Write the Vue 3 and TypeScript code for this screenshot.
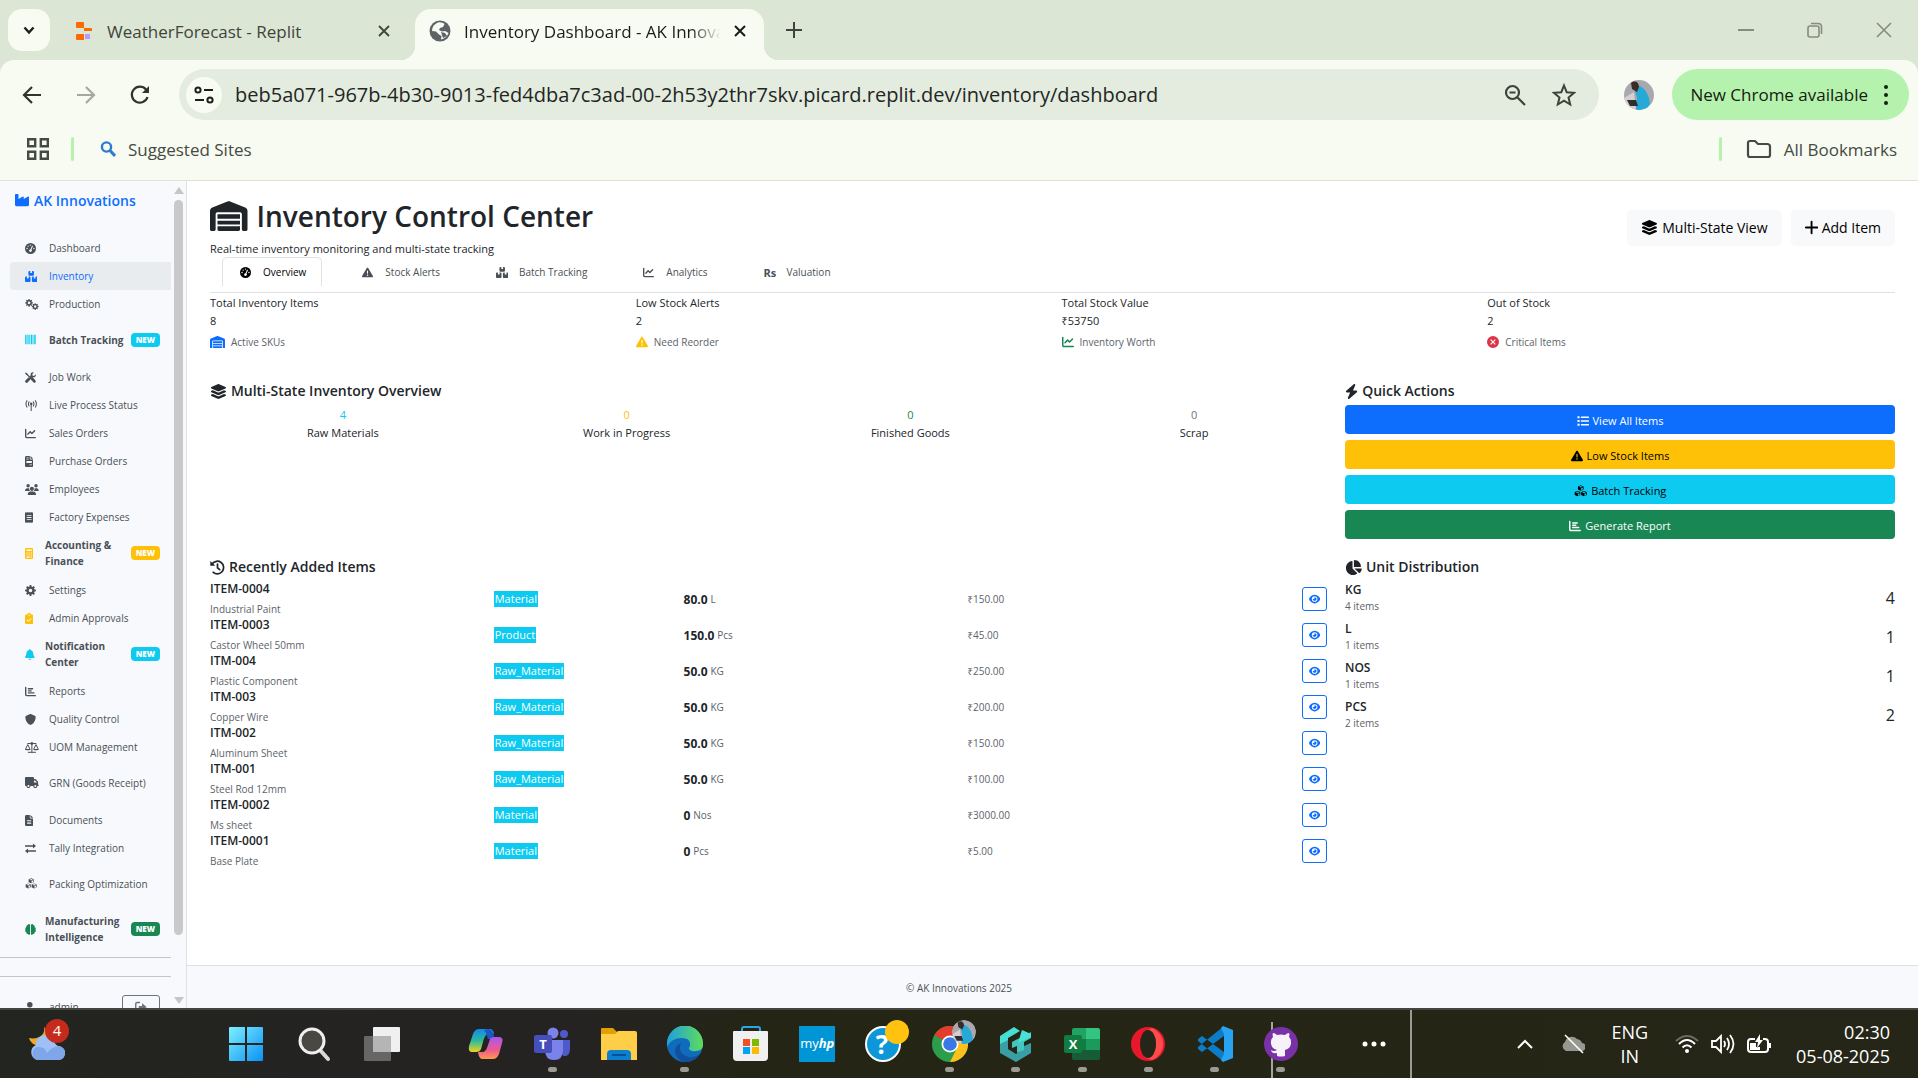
<script setup lang="ts">
import { h, ref } from 'vue'

interface Glyph { w: number; d?: string; s?: string; sw?: number }

function gear(cx: number, cy: number, r: number, hole: number, teeth = 8): string {
  const pts: string[] = []
  const step = (Math.PI * 2) / teeth
  for (let i = 0; i < teeth; i++) {
    const a = i * step
    for (const [k, rad] of [[-0.3, 0.76], [-0.2, 1], [0.2, 1], [0.3, 0.76]]) {
      pts.push(`${(cx + Math.cos(a + k * step) * r * rad).toFixed(1)} ${(cy + Math.sin(a + k * step) * r * rad).toFixed(1)}`)
    }
  }
  return `M${pts.join('L')}ZM${cx - hole} ${cy}a${hole} ${hole} 0 1 0 ${hole * 2} 0a${hole} ${hole} 0 1 0 ${-hole * 2} 0z`
}

function cube(x: number, y: number): string {
  return `M${x} ${y}l120 -48l120 48v130l-120 54l-120 -54zM${x + 36} ${y + 14}l84 34l84 -34l-84 -30zM${x + 136} ${y + 78}v84l72 -32v-82z`
}

const page = 'M64 0C28.7 0 0 28.7 0 64V448c0 35.3 28.7 64 64 64H320c35.3 0 64-28.7 64-64V160H256c-17.7 0-32-14.3-32-32V0H64zM256 0V128H384L256 0z'
const chartAxis = 'M32 32c17.7 0 32 14.3 32 32V400c0 8.8 7.2 16 16 16H480c17.7 0 32 14.3 32 32s-14.3 32-32 32H80c-44.2 0-80-35.8-80-80V64C0 46.3 14.3 32 32 32z'

const glyphs: Record<string, Glyph> = {
  industry: { w: 512, d: 'M32 32C14.3 32 0 46.3 0 64V304v48 80c0 26.5 21.5 48 48 48H464c26.5 0 48-21.5 48-48V304 152.2c0-18.2-19.4-29.7-35.4-21.1L320 215.4V152.2c0-18.2-19.4-29.7-35.4-21.1L128 215.4V64c0-17.7-14.3-32-32-32H32z' },
  gauge: { w: 512, d: 'M0 256a256 256 0 1 1 512 0A256 256 0 1 1 0 256zM288 96a32 32 0 1 0 -64 0 32 32 0 1 0 64 0zM256 416c35.3 0 64-28.7 64-64c0-17.4-6.9-33.1-18.1-44.6L366 161.7c5.3-12.1-.2-26.3-12.3-31.6s-26.3 .2-31.6 12.3L257.9 288c-.6 0-1.3 0-1.9 0c-35.3 0-64 28.7-64 64s28.7 64 64 64zM176 144a32 32 0 1 0 -64 0 32 32 0 1 0 64 0zM96 288a32 32 0 1 0 0-64 32 32 0 1 0 0 64zm352-32a32 32 0 1 0 -64 0 32 32 0 1 0 64 0z' },
  boxes: { w: 576, d: 'M248 0H208c-26.5 0-48 21.5-48 48V160c0 35.3 28.7 64 64 64H352c35.3 0 64-28.7 64-64V48c0-26.5-21.5-48-48-48H328V80c0 8.8-7.2 16-16 16H264c-8.8 0-16-7.2-16-16V0zM48 256c-26.5 0-48 21.5-48 48V464c0 26.5 21.5 48 48 48H208c26.5 0 48-21.5 48-48V304c0-26.5-21.5-48-48-48H168v80c0 8.8-7.2 16-16 16H104c-8.8 0-16-7.2-16-16V256H48zM368 256c-26.5 0-48 21.5-48 48V464c0 26.5 21.5 48 48 48H528c26.5 0 48-21.5 48-48V304c0-26.5-21.5-48-48-48H488v80c0 8.8-7.2 16-16 16H424c-8.8 0-16-7.2-16-16V256H368z' },
  gears: { w: 640, d: gear(190, 180, 180, 62) + gear(475, 350, 160, 56) },
  gear: { w: 512, d: gear(256, 256, 256, 84) },
  barcode: { w: 512, d: 'M0 32h40v448H0zM64 32h24v448H64zM112 32h56v448h-56zM200 32h40v448h-40zM272 32h56v448h-56zM352 32h24v448h-24zM400 32h56v448h-56zM480 32h32v448h-32z' },
  tools: { w: 512, d: 'M30 20L100 60L130 110L240 220L200 260L90 150L40 120L0 50zM310 270L360 250L490 400C512 430 500 470 480 485C450 512 425 505 400 485L270 350zM500 110L420 185L360 170L335 100L410 20C320 -10 240 60 270 150L20 390C-5 420 0 460 30 490C60 515 95 510 120 485L350 245C450 270 525 190 500 110z' },
  tower: { w: 576, s: 'M288 200V500M190 80q-60 100 0 200M386 80q60 100 0 200M90 30q-90 150 0 300M486 30q90 150 0 300', sw: 48, d: 'M228 180a60 60 0 1 0 120 0a60 60 0 1 0 -120 0z' },
  line: { w: 512, d: 'M64 64c0-17.7-14.3-32-32-32S0 46.3 0 64V400c0 44.2 35.8 80 80 80H480c17.7 0 32-14.3 32-32s-14.3-32-32-32H80c-8.8 0-16-7.2-16-16V64zm406.6 86.6c12.5-12.5 12.5-32.8 0-45.3s-32.8-12.5-45.3 0L320 210.7l-57.4-57.4c-12.5-12.5-32.8-12.5-45.3 0l-112 112c-12.5 12.5-12.5 32.8 0 45.3s32.8 12.5 45.3 0L240 221.3l57.4 57.4c12.5 12.5 32.8 12.5 45.3 0l128-128z' },
  invoice: { w: 384, d: page + 'M64 64h110v34H64zM64 128h110v34H64zM64 230h256v100H64zM208 400h112v34H208z' },
  file: { w: 384, d: page + 'M96 240h192v36H96zM96 310h192v36H96zM96 380h192v36H96z' },
  users: { w: 640, d: 'M144 0a80 80 0 1 1 0 160A80 80 0 1 1 144 0zM512 0a80 80 0 1 1 0 160A80 80 0 1 1 512 0zM0 299C0 240 48 192 107 192h42c16 0 31 4 45 10c-10 60 10 92 42 118H21c-12 0-21-10-21-21zM405 320c32-27 52-68 43-118c14-6 29-10 45-10h42c59 0 107 48 107 107c0 11-9 21-21 21zM224 224a96 96 0 1 1 192 0 96 96 0 1 1 -192 0zM128 485C128 412 188 352 261 352H379c73 0 133 60 133 133c0 15-12 27-27 27H155c-15 0-27-12-27-27z' },
  receipt: { w: 384, d: 'M0 10L48 40L96 0L144 40L192 0L240 40L288 0L336 40L384 10V502L336 472L288 512L240 472L192 512L144 472L96 512L48 472L0 502zM80 140v36h224v-36zM80 238v36h224v-36zM80 336v36h224v-36z' },
  calculator: { w: 384, d: 'M64 0H320a64 64 0 0 1 64 64V448a64 64 0 0 1 -64 64H64a64 64 0 0 1 -64 -64V64a64 64 0 0 1 64 -64zM64 64v80h256V64zM64 208v52h56v-52zM164 208v52h56v-52zM264 208v52h56v-52zM64 300v52h56v-52zM164 300v52h56v-52zM264 300v52h56v-52zM64 396v52h156v-52zM264 396v52h56v-52z' },
  clipboard: { w: 384, d: 'M192 0c-42 0-77 27-90 64H64C29 64 0 93 0 128V448c0 35 29 64 64 64H320c35 0 64-29 64-64V128c0-35-29-64-64-64H282C269 27 234 0 192 0zm0 64a32 32 0 1 1 0 64 32 32 0 1 1 0-64zM305 273L177 401c-9 9-25 9-34 0L79 337l34-34 47 47L271 239z' },
  bell: { w: 448, d: 'M224 0c-17.7 0-32 14.3-32 32V51.2C119 66 64 130.6 64 208v18.8c0 47-17.3 92.4-48.5 127.6l-7.4 8.3c-8.4 9.4-10.4 22.9-5.3 34.4S19.4 416 32 416H416c12.6 0 24-7.4 29.2-18.9s3.1-25-5.3-34.4l-7.4-8.3C401.3 319.2 384 273.9 384 226.8V208c0-77.4-55-142-128-156.8V32c0-17.7-14.3-32-32-32zm45.3 493.3c12-12 18.7-28.3 18.7-45.3H224 160c0 17 6.7 33.3 18.7 45.3s28.3 18.7 45.3 18.7s33.3-6.7 45.3-18.7z' },
  bars: { w: 512, d: chartAxis + 'M128 128c0-17.7 14.3-32 32-32l192 0c17.7 0 32 14.3 32 32s-14.3 32-32 32l-192 0c-17.7 0-32-14.3-32-32zm32 64H288c17.7 0 32 14.3 32 32s-14.3 32-32 32H160c-17.7 0-32-14.3-32-32s14.3-32 32-32zm0 96H416c17.7 0 32 14.3 32 32s-14.3 32-32 32H160c-17.7 0-32-14.3-32-32s14.3-32 32-32z' },
  shield: { w: 512, d: 'M256 0c4.6 0 9.2 1 13.4 2.9L457.7 82.8c22 9.3 38.4 31 38.3 57.2c-.5 99.2-41.3 280.7-213.6 363.2c-16.7 8-36.1 8-52.8 0C57.3 420.7 16.5 239.2 16 140c-.1-26.2 16.3-47.9 38.3-57.2L242.7 2.9C246.8 1 251.4 0 256 0z' },
  scale: { w: 640, s: 'M130 70H510M320 30V470M150 480H490M30 320L128 120L226 320M414 320L512 120L610 320', sw: 46, d: 'M0 320H256C250 410 6 410 0 320zM384 320H640C634 410 390 410 384 320zM256 70a64 64 0 1 0 128 0a64 64 0 1 0 -128 0z' },
  truck: { w: 640, d: 'M48 0C21.5 0 0 21.5 0 48V368c0 26.5 21.5 48 48 48H64c0 53 43 96 96 96s96-43 96-96H384c0 53 43 96 96 96s96-43 96-96h32c17.7 0 32-14.3 32-32s-14.3-32-32-32V288 256 237.3c0-17-6.7-33.3-18.7-45.3L512 114.7c-12-12-28.3-18.7-45.3-18.7H416V48c0-26.5-21.5-48-48-48H48zM416 160h50.7L544 237.3V256H416V160zM112 416a48 48 0 1 1 96 0 48 48 0 1 1 -96 0zm368-48a48 48 0 1 1 0 96 48 48 0 1 1 0-96z' },
  exchange: { w: 512, s: 'M10 140H440M500 372H70', sw: 60, d: 'M370 20L512 140L370 260zM142 252L0 372L142 492z' },
  cubes: { w: 576, d: cube(168, 62) + cube(30, 300) + cube(306, 300) },
  brain: { w: 512, d: 'M236 30C200-10 140 0 125 50C75 55 50 100 65 145C15 165 0 220 20 265C-5 320 20 375 65 385C60 440 105 470 145 465C170 520 236 520 236 460zM276 30C312-10 372 0 387 50C437 55 462 100 447 145C497 165 512 220 492 265C517 320 492 375 447 385C452 440 407 470 367 465C342 520 276 520 276 460z' },
  user: { w: 448, d: 'M224 256A128 128 0 1 0 224 0a128 128 0 1 0 0 256zm-45.7 48C79.8 304 0 383.8 0 482.3C0 498.7 13.3 512 29.7 512H418.3c16.4 0 29.7-13.3 29.7-29.7C448 383.8 368.2 304 269.7 304H178.3z' },
  logout: { w: 512, s: 'M190 64H90q-58 0-58 58V390q0 58 58 58H190', sw: 60, d: 'M160 210H300V100L500 256L300 412V302H160z' },
  triangle: { w: 512, d: 'M256 32c14.2 0 27.3 7.5 34.5 19.8l216 368c7.3 12.4 7.3 27.7 .2 40.1S486.3 480 472 480H40c-14.3 0-27.6-7.7-34.7-20.1s-7-27.8 .2-40.1l216-368C228.7 39.5 241.8 32 256 32zm0 128c-13.3 0-24 10.7-24 24V296c0 13.3 10.7 24 24 24s24-10.7 24-24V184c0-13.3-10.7-24-24-24zm32 224a32 32 0 1 0 -64 0 32 32 0 1 0 64 0z' },
  warehouse: { w: 640, d: 'M0 488V171.3c0-26.2 15.9-49.7 40.2-59.4L308.1 4.8c7.6-3.1 16.1-3.1 23.8 0L599.8 111.9c24.3 9.7 40.2 33.3 40.2 59.4V488c0 13.3-10.7 24-24 24H568c-13.3 0-24-10.7-24-24V224c0-17.7-14.3-32-32-32H128c-17.7 0-32 14.3-32 32V488c0 13.3-10.7 24-24 24H24c-13.3 0-24-10.7-24-24zm488 24l-336 0c-13.3 0-24-10.7-24-24V432H512l0 56c0 13.3-10.7 24-24 24zM128 400V336H512v64H128zm0-96V224H512v80H128z' },
  cross: { w: 512, d: 'M256 0a256 256 0 1 1 0 512a256 256 0 1 1 0-512zM175 141L141 175L222 256L141 337L175 371L256 290L337 371L371 337L290 256L371 175L337 141L256 222z' },
  layers: { w: 576, d: 'M264.5 5.2c14.9-6.9 32.1-6.9 47 0l218.6 101c8.5 3.9 13.9 12.4 13.9 21.8s-5.4 17.9-13.9 21.8l-218.6 101c-14.9 6.9-32.1 6.9-47 0L45.9 149.8C37.4 145.8 32 137.3 32 128s5.4-17.9 13.9-21.8L264.5 5.2zM476.9 209.6l53.2 24.6c8.5 3.9 13.9 12.4 13.9 21.8s-5.4 17.9-13.9 21.8l-218.6 101c-14.9 6.9-32.1 6.9-47 0L45.9 277.8C37.4 273.8 32 265.3 32 256s5.4-17.9 13.9-21.8l53.2-24.6 152 70.2c23.4 10.8 50.4 10.8 73.8 0l152-70.2zm-152 198.2l152-70.2 53.2 24.6c8.5 3.9 13.9 12.4 13.9 21.8s-5.4 17.9-13.9 21.8l-218.6 101c-14.9 6.9-32.1 6.9-47 0L45.9 405.8C37.4 401.8 32 393.3 32 384s5.4-17.9 13.9-21.8l53.2-24.6 152 70.2c23.4 10.8 50.4 10.8 73.8 0z' },
  bolt: { w: 448, d: 'M349.4 44.6c5.9-13.7 1.5-29.7-10.6-38.5s-28.6-8-39.9 1.8l-256 224c-10 8.8-13.6 22.9-8.9 35.3S50.7 288 64 288H175.5L98.6 467.4c-5.9 13.7-1.5 29.7 10.6 38.5s28.6 8 39.9-1.8l256-224c10-8.8 13.6-22.9 8.9-35.3s-16.6-20.7-30-20.7H272.5L349.4 44.6z' },
  history: { w: 512, s: 'M75 130A215 215 0 1 1 110 420M256 140V266L330 330', sw: 60, d: 'M10 30L10 200H180z' },
  pie: { w: 576, d: 'M304 240V16.6c0-9 7-16.6 16-16.6C443.7 0 544 100.3 544 224c0 9-7.6 16-16.6 16H304zM32 272C32 150.7 122.1 50.3 239 34.3c9.2-1.3 17 6.1 17 15.4V288L412.5 444.5c6.7 6.7 6.2 17.7-1.5 23.1C371.8 495.6 323.8 512 272 512C139.5 512 32 404.6 32 272zm526.4 16c9.3 0 16.6 7.8 15.4 17c-7.7 55.9-34.6 105.6-73.9 142.3c-6 5.6-15.4 5.2-21.2-.7L320 288H558.4z' },
  eye: { w: 576, d: 'M288 32c-80.8 0-145.5 36.8-192.6 80.6C48.6 156 17.3 208 2.5 243.7c-3.3 7.9-3.3 16.7 0 24.6C17.3 304 48.6 356 95.4 399.4C142.5 443.2 207.2 480 288 480s145.5-36.8 192.6-80.6c46.8-43.5 78.1-95.4 93-131.1c3.3-7.9 3.3-16.7 0-24.6c-14.9-35.7-46.2-87.7-93-131.1C433.5 68.8 368.8 32 288 32zM144 256a144 144 0 1 1 288 0 144 144 0 1 1 -288 0zm144-64c0 35.3-28.7 64-64 64c-7.1 0-13.9-1.2-20.3-3.3c-5.5-1.8-11.9 1.6-11.7 7.4c.3 6.9 1.3 13.8 3.2 20.7c13.7 51.2 66.4 81.6 117.6 67.9s81.6-66.4 67.9-117.6c-11.1-41.5-47.8-69.4-88.6-71.1c-5.8-.2-9.2 6.1-7.4 11.7c2.1 6.4 3.3 13.2 3.3 20.3z' },
  list: { w: 512, s: 'M190 96H490M190 256H490M190 416H490', sw: 64, d: 'M20 50h90v90H20zM20 210h90v90H20zM20 370h90v90H20z' },
  plus: { w: 448, s: 'M224 60V452M28 256H420', sw: 64 },
}

const Icon = (props: { name: string }) => {
  const g = glyphs[props.name]
  return h('svg', { viewBox: `0 0 ${g.w} 512`, class: 'icon', 'aria-hidden': 'true' }, [
    g.d ? h('path', { d: g.d, fill: 'currentColor', 'fill-rule': 'evenodd' }) : null,
    g.s ? h('path', { d: g.s, fill: 'none', stroke: 'currentColor', 'stroke-width': g.sw, 'stroke-linecap': 'round' }) : null,
  ])
}
Icon.props = ['name']

const url = ref('beb5a071-967b-4b30-9013-fed4dba7c3ad-00-2h53y2thr7skv.picard.replit.dev/inventory/dashboard')

const nav = [
  { icon: 'gauge', label: 'Dashboard' },
  { icon: 'boxes', label: 'Inventory', active: true },
  { icon: 'gears', label: 'Production' },
  { icon: 'barcode', label: 'Batch Tracking', tone: 'cyan', badge: true },
  { icon: 'tools', label: 'Job Work' },
  { icon: 'tower', label: 'Live Process Status' },
  { icon: 'line', label: 'Sales Orders' },
  { icon: 'invoice', label: 'Purchase Orders' },
  { icon: 'users', label: 'Employees' },
  { icon: 'receipt', label: 'Factory Expenses' },
  { icon: 'calculator', label: 'Accounting & Finance', tone: 'amber', badge: true, wrap: true },
  { icon: 'gear', label: 'Settings' },
  { icon: 'clipboard', label: 'Admin Approvals', tone: 'amber' },
  { icon: 'bell', label: 'Notification Center', tone: 'cyan', badge: true, wrap: true },
  { icon: 'bars', label: 'Reports' },
  { icon: 'shield', label: 'Quality Control' },
  { icon: 'scale', label: 'UOM Management' },
  { icon: 'truck', label: 'GRN (Goods Receipt)', tall: true },
  { icon: 'file', label: 'Documents' },
  { icon: 'exchange', label: 'Tally Integration' },
  { icon: 'cubes', label: 'Packing Optimization', tall: true },
  { icon: 'brain', label: 'Manufacturing Intelligence', tone: 'green', badge: true, wrap: true },
]

const tabs = [
  { icon: 'gauge', label: 'Overview' },
  { icon: 'triangle', label: 'Stock Alerts' },
  { icon: 'boxes', label: 'Batch Tracking' },
  { icon: 'line', label: 'Analytics' },
  { icon: '', label: 'Valuation' },
]
const currentTab = ref('Overview')

const stats = [
  { label: 'Total Inventory Items', value: '8', icon: 'warehouse', tone: 'blue', note: 'Active SKUs' },
  { label: 'Low Stock Alerts', value: '2', icon: 'triangle', tone: 'amber', note: 'Need Reorder' },
  { label: 'Total Stock Value', value: '₹53750', icon: 'line', tone: 'green', note: 'Inventory Worth' },
  { label: 'Out of Stock', value: '2', icon: 'cross', tone: 'red', note: 'Critical Items' },
]

const states = [
  { count: 4, label: 'Raw Materials', tone: 'cyan' },
  { count: 0, label: 'Work in Progress', tone: 'amber' },
  { count: 0, label: 'Finished Goods', tone: 'green' },
  { count: 0, label: 'Scrap', tone: 'grey' },
]

const actions = [
  { icon: 'list', label: 'View All Items', kind: 'primary' },
  { icon: 'triangle', label: 'Low Stock Items', kind: 'warning' },
  { icon: 'cubes', label: 'Batch Tracking', kind: 'info' },
  { icon: 'bars', label: 'Generate Report', kind: 'success' },
]

const items = [
  { code: 'ITEM-0004', name: 'Industrial Paint', type: 'Material', qty: '80.0', unit: 'L', price: '₹150.00' },
  { code: 'ITEM-0003', name: 'Castor Wheel 50mm', type: 'Product', qty: '150.0', unit: 'Pcs', price: '₹45.00' },
  { code: 'ITM-004', name: 'Plastic Component', type: 'Raw_Material', qty: '50.0', unit: 'KG', price: '₹250.00' },
  { code: 'ITM-003', name: 'Copper Wire', type: 'Raw_Material', qty: '50.0', unit: 'KG', price: '₹200.00' },
  { code: 'ITM-002', name: 'Aluminum Sheet', type: 'Raw_Material', qty: '50.0', unit: 'KG', price: '₹150.00' },
  { code: 'ITM-001', name: 'Steel Rod 12mm', type: 'Raw_Material', qty: '50.0', unit: 'KG', price: '₹100.00' },
  { code: 'ITEM-0002', name: 'Ms sheet', type: 'Material', qty: '0', unit: 'Nos', price: '₹3000.00' },
  { code: 'ITEM-0001', name: 'Base Plate', type: 'Material', qty: '0', unit: 'Pcs', price: '₹5.00' },
]

const units = [
  { unit: 'KG', count: 4 },
  { unit: 'L', count: 1 },
  { unit: 'NOS', count: 1 },
  { unit: 'PCS', count: 2 },
]
</script>

<template>
  <div class="desktop">
    <header class="browser">
      <div class="strip">
        <button class="tab-search" aria-label="Search tabs">
          <svg viewBox="0 0 14 14" width="14" height="14"><path d="M2.500 4.500L7 9.500L11.500 4.500" fill="none" stroke="#1b1e19" stroke-width="2.400" /></svg>
        </button>
        <div class="tab">
          <svg viewBox="0 0 16 18" width="16" height="18"><path d="M1 0h6a1 1 0 0 1 1 1v5H1a1 1 0 0 1-1-1V1a1 1 0 0 1 1-1zM8 6h7a1 1 0 0 1 1 1v2H8zM1 12h7v6H1a1 1 0 0 1-1-1v-4a1 1 0 0 1 1-1z" fill="#ff6a00" /><path d="M9 12h5v5H9z" fill="#b39dff" /></svg>
          <span class="tab-title">WeatherForecast - Replit</span>
          <button class="close" aria-label="Close tab"><svg viewBox="0 0 12 12" width="12" height="12"><path d="M1 1L11 11M11 1L1 11" stroke="#3e453b" stroke-width="1.800" /></svg></button>
        </div>
        <div class="tab current">
          <svg viewBox="0 0 22 22" width="22" height="22"><circle cx="11" cy="11" r="10.500" fill="#5f6368" /><path d="M9 2.500C12 2 14 3 15.500 4L14 7L11 8L10 10L13 11.500L16 11L19.500 13C18 17 15 19 12 19.500L12.500 16L10 14.500L7 11.500L3 11C3 7 5 4 9 2.500z" fill="#f8fbf2" /><path d="M12 12l4 1 2 3-4 2z" fill="#5f6368" /></svg>
          <span class="tab-title">Inventory Dashboard - AK Innovations</span>
          <button class="close" aria-label="Close tab"><svg viewBox="0 0 12 12" width="12" height="12"><path d="M1 1L11 11M11 1L1 11" stroke="#191d17" stroke-width="2" /></svg></button>
        </div>
        <button class="new-tab" aria-label="New tab"><svg viewBox="0 0 16 16" width="16" height="16"><path d="M8 0V16M0 8H16" stroke="#3e453b" stroke-width="2" /></svg></button>
        <div class="win-controls">
          <button aria-label="Minimize"><svg viewBox="0 0 16 16" width="16" height="16"><path d="M0 8H16" stroke="#858c80" stroke-width="2" /></svg></button>
          <button aria-label="Restore"><svg viewBox="0 0 16 16" width="16" height="16" fill="none" stroke="#858c80" stroke-width="1.600"><rect x="1" y="4" width="11" height="11" rx="2" /><path d="M4 1.500H11Q14.500 1.500 14.500 5V12" /></svg></button>
          <button aria-label="Close"><svg viewBox="0 0 16 16" width="16" height="16"><path d="M1 1L15 15M15 1L1 15" stroke="#858c80" stroke-width="1.600" /></svg></button>
        </div>
      </div>
      <div class="toolbar">
        <button class="tool" aria-label="Back"><svg viewBox="0 0 20 20" width="20" height="20"><path d="M19 10H2M10 2L2 10L10 18" fill="none" stroke="#2e352b" stroke-width="2.200" /></svg></button>
        <button class="tool" aria-label="Forward"><svg viewBox="0 0 20 20" width="20" height="20"><path d="M1 10H18M10 2L18 10L10 18" fill="none" stroke="#a4a9a0" stroke-width="2.200" /></svg></button>
        <button class="tool" aria-label="Reload"><svg viewBox="0 0 20 20" width="20" height="20"><path d="M17.500 12A8 8 0 1 1 16 4.500L18 7" fill="none" stroke="#2e352b" stroke-width="2.200" /><path d="M19 1V8H12z" fill="#2e352b" /></svg></button>
        <div class="omnibox">
          <button class="site" aria-label="Site information"><svg viewBox="0 0 20 18" width="20" height="18" fill="none" stroke="#1b1e19" stroke-width="2"><circle cx="4" cy="4" r="2.600" /><path d="M10 4H19M1 14H10" /><circle cx="16" cy="14" r="2.600" /></svg></button>
          <input v-model="url" type="text" aria-label="Address" spellcheck="false">
          <button class="in-box" aria-label="Zoom"><svg viewBox="0 0 22 22" width="22" height="22" fill="none" stroke="#3c4339" stroke-width="2.200"><circle cx="8.500" cy="8.500" r="6.500" /><path d="M13.500 13.500L21 21M5.500 8.500H11.500" /></svg></button>
          <button class="in-box" aria-label="Bookmark"><svg viewBox="0 0 24 24" width="24" height="24"><path d="M12 2.500L14.700 9.200L22 9.800L16.500 14.500L18.200 21.500L12 17.700L5.800 21.500L7.500 14.500L2 9.800L9.300 9.200z" fill="none" stroke="#3c4339" stroke-width="2" /></svg></button>
        </div>
        <button class="avatar" aria-label="Profile"><svg viewBox="0 0 30 30" width="30" height="30"><defs><clipPath id="av"><circle cx="15" cy="15" r="15" /></clipPath></defs><g clip-path="url(#av)"><rect width="30" height="30" fill="#a9a8ae" /><path d="M0 18L10 12L12 30H0z" fill="#d4d0cd" /><path d="M14 6C20 6 25 14 26 24L22 30H12L13 18L11 11z" fill="#25a9d6" /><path d="M7 3C11 0 15 2 15 7L13 12L8 9z" fill="#3b2b25" /><path d="M3 20L12 20L14 26L6 26z" fill="#2f2c33" /></g></svg></button>
        <button class="update">New Chrome available<svg viewBox="0 0 4 20" width="4" height="20" fill="#14210f"><circle cx="2" cy="2" r="2" /><circle cx="2" cy="10" r="2" /><circle cx="2" cy="18" r="2" /></svg></button>
      </div>
      <div class="bookmarks">
        <button class="apps" aria-label="Apps"><svg viewBox="0 0 22 22" width="22" height="22" fill="none" stroke="#454b42" stroke-width="2.400"><path d="M1.200 1.200h7v7h-7zM13.800 1.200h7v7h-7zM1.200 13.800h7v7h-7zM13.800 13.800h7v7h-7z" /></svg></button>
        <i class="sep"></i>
        <a class="bookmark" href="#"><svg viewBox="0 0 16 16" width="16" height="16" fill="none" stroke="#2b7cd0" stroke-width="2.400"><circle cx="6.500" cy="6" r="4.600" /><path d="M10 9.500L15 15" stroke-width="3" /></svg>Suggested Sites</a>
        <i class="sep push"></i>
        <button class="bookmark"><svg viewBox="0 0 26 20" width="26" height="20"><path d="M2 4Q2 2 4 2H9L12 5H21Q24 5 24 7.500V16Q24 18 22 18H4Q2 18 2 16z" fill="none" stroke="#454b42" stroke-width="2.200" /></svg>All Bookmarks</button>
      </div>
    </header>

    <div class="app">
      <aside class="sidebar">
        <div class="side-body">
          <a class="brand" href="#"><Icon name="industry" />AK Innovations</a>
          <nav>
            <a v-for="n in nav" :key="n.label" href="#" class="nav-item" :class="{ active: n.active, tall: n.badge || n.tall, strong: n.badge, wrap: n.wrap }">
              <span class="nav-icon" :class="n.tone"><Icon :name="n.icon" /></span>
              <span class="nav-label">{{ n.label }}</span>
              <span v-if="n.badge" class="new" :class="n.tone">NEW</span>
            </a>
          </nav>
          <hr>
          <hr>
          <div class="account">
            <span class="nav-icon"><Icon name="user" /></span>
            <span class="nav-label">admin</span>
            <button class="logout" aria-label="Log out"><Icon name="logout" /></button>
          </div>
        </div>
        <div class="rail"><i class="up"></i><i class="thumb"></i><i class="down"></i></div>
      </aside>

      <main>
        <div class="page-head">
          <div>
            <h1><Icon name="warehouse" />Inventory Control Center</h1>
            <p class="lead">Real-time inventory monitoring and multi-state tracking</p>
          </div>
          <div class="head-actions">
            <button><Icon name="layers" />Multi-State View</button>
            <button><Icon name="plus" />Add Item</button>
          </div>
        </div>

        <div class="tabs" role="tablist">
          <button v-for="t in tabs" :key="t.label" role="tab" :aria-selected="currentTab === t.label" :class="{ on: currentTab === t.label }" @click="currentTab = t.label">
            <span class="tab-icon"><Icon v-if="t.icon" :name="t.icon" /><b v-else>Rs</b></span>{{ t.label }}
          </button>
        </div>

        <section class="stats">
          <div v-for="s in stats" :key="s.label">
            <p>{{ s.label }}</p>
            <p>{{ s.value }}</p>
            <p class="note"><span :class="s.tone"><Icon :name="s.icon" /></span>{{ s.note }}</p>
          </div>
        </section>

        <div class="split">
          <section class="wide">
            <h2><Icon name="layers" />Multi-State Inventory Overview</h2>
            <div class="states">
              <div v-for="s in states" :key="s.label"><p :class="s.tone">{{ s.count }}</p><p>{{ s.label }}</p></div>
            </div>
          </section>
          <section class="narrow">
            <h2><Icon name="bolt" />Quick Actions</h2>
            <div class="actions">
              <button v-for="a in actions" :key="a.label" :class="a.kind"><Icon :name="a.icon" />{{ a.label }}</button>
            </div>
          </section>
        </div>

        <div class="split second">
          <section class="wide">
            <h2><Icon name="history" />Recently Added Items</h2>
            <table>
              <colgroup><col class="c-item"><col class="c-type"><col class="c-qty"><col class="c-price"><col class="c-view"></colgroup>
              <tbody>
                <tr v-for="i in items" :key="i.code">
                  <td><strong class="code">{{ i.code }}</strong><small>{{ i.name }}</small></td>
                  <td><span class="type">{{ i.type }}</span></td>
                  <td><strong>{{ i.qty }}</strong> <small class="unit">{{ i.unit }}</small></td>
                  <td class="price">{{ i.price }}</td>
                  <td class="view"><button :aria-label="'View ' + i.code"><Icon name="eye" /></button></td>
                </tr>
              </tbody>
            </table>
          </section>
          <section class="narrow">
            <h2><Icon name="pie" />Unit Distribution</h2>
            <ul>
              <li v-for="u in units" :key="u.unit">
                <div><p>{{ u.unit }}</p><small>{{ u.count }} items</small></div>
                <span class="count">{{ u.count }}</span>
              </li>
            </ul>
          </section>
        </div>
      </main>
      <footer>© AK Innovations 2025</footer>
    </div>

    <div class="taskbar">
      <button class="weather" aria-label="Weather">
        <svg viewBox="0 0 36 36" width="36" height="36"><path d="M15 1C17 8 10 14 0 12C2 19 10 22 16 18L18 4z" fill="#f2a62b" /><path d="M8 34a8 8 0 0 1-1-15A9 9 0 0 1 24 14Q27 20 30 20A7 7 0 0 1 28 34z" fill="#9dc0f5" /><path d="M8 34a7 7 0 0 1 0-13Q16 20 18 27Q22 21 30 20A7 7 0 0 1 28 34z" fill="#7fa6e8" /></svg>
        <span class="alert">4</span>
      </button>
      <div class="system">
        <button aria-label="Start"><svg viewBox="0 0 36 36" width="36" height="36"><defs><linearGradient id="wn" x1="0" y1="0" x2="1" y2="1"><stop offset="0" stop-color="#7ef0ff" /><stop offset="1" stop-color="#0a91f5" /></linearGradient></defs><path d="M1 2Q1 1 2 1H17V17H1zM19 1H34Q35 1 35 2V17H19zM1 19H17V35H2Q1 35 1 34zM19 19H35V34Q35 35 34 35H19z" fill="url(#wn)" /></svg></button>
        <button aria-label="Search"><svg viewBox="0 0 36 36" width="36" height="36"><path d="M24 24L32 33" stroke="#dadada" stroke-width="4" stroke-linecap="round" /><circle cx="16" cy="15" r="12" fill="#4a4845" stroke="#efefef" stroke-width="3" /></svg></button>
        <button aria-label="Task view"><svg viewBox="0 0 36 36" width="36" height="36"><rect y="10" width="27" height="25" rx="1" fill="#666" /><rect x="9" y="1" width="27" height="25" rx="1" fill="#f0f0f0" /><path d="M9 10H27V26H9z" fill="#b5b5b5" /></svg></button>
      </div>
      <div class="pinned">
        <button aria-label="Copilot"><svg viewBox="0 0 36 36" width="36" height="36"><defs><linearGradient id="cp" x1="0" y1="0" x2="0" y2="1"><stop offset="0" stop-color="#1389e8" /><stop offset=".5" stop-color="#2ab8a0" /><stop offset="1" stop-color="#ecd51c" /></linearGradient><linearGradient id="cq" x1="0" y1="0" x2="0" y2="1"><stop offset="0" stop-color="#a757f0" /><stop offset=".6" stop-color="#ee5a8f" /><stop offset="1" stop-color="#ff9a4c" /></linearGradient></defs><path d="M11 3H22Q25 3 26 8H20Q17 8 15 16L13 23Q12 26 8 26H4Q0 26 1 20L5 8Q7 3 11 3z" fill="url(#cp)" /><path d="M20 3Q24 3 26 10L27 13H20L19 10Q18 6 16 4z" fill="#1b55c8" /><path d="M25 33H14Q11 33 10 26H15Q18 26 20 19L22 13Q23 11 27 11H31Q36 11 34 17L31 28Q29 33 25 33z" fill="url(#cq)" /></svg></button>
        <button class="open" aria-label="Teams"><svg viewBox="0 0 36 36" width="36" height="36"><circle cx="19" cy="7" r="5.500" fill="#7b83eb" /><circle cx="30" cy="8" r="4" fill="#5059c9" /><path d="M23 14H36V23Q36 31 29 30z" fill="#5059c9" /><path d="M11 14H29V24Q29 34 20 34Q11 34 11 24z" fill="#7b83eb" /><rect y="9" width="18" height="18" rx="2" fill="#464ebb" /><text x="9" y="23" text-anchor="middle" font-size="13" font-weight="700" fill="#fff">T</text></svg></button>
        <button aria-label="File Explorer"><svg viewBox="0 0 36 36" width="36" height="36"><path d="M0 3Q0 2 1 2H12L16 6V10H0z" fill="#e0a100" /><path d="M0 8H14L17 5H34Q36 5 36 7V34H0z" fill="#ffce48" /><path d="M6 34V28Q6 24 10 24H26Q30 24 30 28V34z" fill="#0d7fd0" /><path d="M11 29H25" stroke="#084f94" stroke-width="2" /></svg></button>
        <button class="open" aria-label="Edge"><svg viewBox="0 0 36 36" width="36" height="36"><defs><linearGradient id="eg" x1="0" y1="0" x2="1" y2="0"><stop offset="0" stop-color="#1f9fe0" /><stop offset="1" stop-color="#5fdc5a" /></linearGradient></defs><circle cx="18" cy="18" r="18" fill="#0f6cbd" /><path d="M0 18A18 18 0 0 1 36 17C37 24 31 26 25 25Q20 24 23 20Q24 12 15 12Q4 12 0 21z" fill="url(#eg)" /><path d="M14 17Q10 28 22 31Q28 32 33 28Q28 36 18 36Q8 34 8 24Q9 19 14 17z" fill="#11509b" /></svg></button>
        <button aria-label="Microsoft Store"><svg viewBox="0 0 36 36" width="36" height="36"><path d="M9 8V3Q9 1 11 1H25Q27 1 27 3V8" fill="none" stroke="#2aa5e8" stroke-width="2" /><path d="M0 6Q0 5 1 5H34Q35 5 35 6V31Q35 35 31 35H4Q0 35 0 31z" fill="#f0f0f0" /><path d="M10 13h7v7h-7z" fill="#f25022" /><path d="M19 13h7v7h-7z" fill="#7fba00" /><path d="M10 21h7v7h-7z" fill="#00a4ef" /><path d="M19 21h7v7h-7z" fill="#ffb900" /></svg></button>
        <button aria-label="myHP"><span class="hp">my<b>hp</b></span></button>
        <button class="corner" aria-label="HP Support"><svg viewBox="0 0 36 36" width="36" height="36"><circle cx="18" cy="18" r="17" fill="#0d96d8" stroke="#fff" stroke-width="2" /><text x="17" y="28" text-anchor="middle" font-size="26" font-weight="700" fill="#fff">?</text></svg><i class="dot yellow"></i></button>
        <button class="open corner" aria-label="Chrome"><svg viewBox="0 0 36 36" width="36" height="36"><circle cx="18" cy="18" r="18" fill="#2c9e4b" /><path d="M18 18L2.400 9A18 18 0 0 1 33.600 9z" fill="#e33b2e" /><path d="M18 10H34.200A18 18 0 0 1 18 36L25 22z" fill="#fcc21b" /><circle cx="18" cy="18" r="8.500" fill="#fff" /><circle cx="18" cy="18" r="6.800" fill="#3b78e7" /></svg><svg class="dot" viewBox="0 0 30 30"><g clip-path="url(#av)"><rect width="30" height="30" fill="#a9a8ae" /><path d="M0 18L10 12L12 30H0z" fill="#d4d0cd" /><path d="M14 6C20 6 25 14 26 24L22 30H12L13 18L11 11z" fill="#25a9d6" /><path d="M7 3C11 0 15 2 15 7L13 12L8 9z" fill="#3b2b25" /><path d="M3 20L12 20L14 26L6 26z" fill="#2f2c33" /></g></svg></button>
        <button class="open" aria-label="Code editor"><svg viewBox="0 0 36 36" width="36" height="36"><path d="M2 10L16 1L22 5L10 12V22L2 26z" fill="#46dfd6" /><path d="M2 18L10 14V23L18 28L26 23V20L33 17V27L18 36L2 27z" fill="#3a9ea5" /><path d="M14 16L33 6V12L26 16V24L19 27V20L14 22z" fill="#43c6c2" /><path d="M24 4L33 8L33 11L20 17z" fill="#4be0d6" /></svg></button>
        <button class="open" aria-label="Excel"><svg viewBox="0 0 36 36" width="36" height="36"><path d="M8 4Q8 2 10 2H22V13H8z" fill="#21a366" /><path d="M22 2H34Q36 2 36 4V13H22z" fill="#33c481" /><path d="M8 13H22V24H8z" fill="#107c41" /><path d="M22 13H36V24H22z" fill="#1c9a59" /><path d="M8 24H36V32Q36 34 34 34H10Q8 34 8 32z" fill="#185c37" /><rect y="9" width="18" height="18" rx="2" fill="#107c41" /><text x="9" y="23" text-anchor="middle" font-size="13" font-weight="700" fill="#fff">X</text></svg></button>
        <button class="open" aria-label="Opera"><svg viewBox="0 0 36 36" width="36" height="36"><circle cx="18" cy="18" r="17" fill="#e8182c" /><path d="M22 2A17 17 0 0 1 22 34Q14 32 14 30Q26 30 26 18Q26 6 16 5z" fill="#ff4b4b" /><ellipse cx="18" cy="18" rx="8" ry="14" fill="#252518" /></svg></button>
        <button class="open" aria-label="Visual Studio Code"><svg viewBox="0 0 36 36" width="36" height="36"><path d="M27 0L27 10L5 26L1 23V21zM27 36V26L5 10L1 13V15z" fill="#0c7cc6" /><path d="M26 0L36 4V32L26 36L24 34L27 28V8L24 2z" fill="#27a3f2" /></svg></button>
        <button class="open hub" aria-label="GitHub Desktop"><svg viewBox="0 0 36 36" width="36" height="36"><circle cx="18" cy="18" r="17" fill="#7a31a8" /><path d="M14 30V27Q9 28 8 24Q11 26 14 24Q7 22 8 15Q8 13 10 11Q9 8 10 7Q12 7 14 9Q18 8 22 9Q24 7 26 7Q27 8 26 11Q28 13 28 15Q29 22 22 24V30Q18 31 14 30z" fill="#f6f2fa" /></svg></button>
      </div>
      <button class="more" aria-label="More apps"><svg viewBox="0 0 24 6" width="24" height="6" fill="#fff"><circle cx="3" cy="3" r="2.500" /><circle cx="12" cy="3" r="2.500" /><circle cx="21" cy="3" r="2.500" /></svg></button>
      <i class="bar-line"></i>
      <div class="tray">
        <button class="chev" aria-label="Show hidden icons"><svg viewBox="0 0 16 10" width="16" height="10"><path d="M1 9L8 2L15 9" fill="none" stroke="#fff" stroke-width="2" /></svg></button>
        <button aria-label="OneDrive"><svg viewBox="0 0 24 20" width="24" height="20"><path d="M5 17A5 5 0 0 1 4 8A7 7 0 0 1 16 5A6 6 0 0 1 21 9A4 4 0 0 1 20 17z" fill="#989892" /><path d="M4 1L22 19" stroke="#fff" stroke-width="1.600" /></svg></button>
        <span class="lang">ENG<br>IN</span>
        <div class="status">
          <svg viewBox="0 0 24 20" width="24" height="20" fill="none" stroke="#fff" stroke-width="2"><path d="M1 7Q12-3 23 7" stroke="#6a6b60" /><path d="M4 10Q12 2 20 10M7.500 13.500Q12 9 16.500 13.500" /><circle cx="12" cy="17" r="2" fill="#fff" stroke="none" /></svg>
          <svg viewBox="0 0 24 20" width="24" height="20" fill="none" stroke="#fff" stroke-width="1.800"><path d="M1 7H5L10 2V18L5 13H1zM13 7Q15 10 13 13M16 4Q20 10 16 16M19 1Q26 10 19 19" /></svg>
          <svg viewBox="0 0 24 20" width="24" height="20"><path d="M8 5H4Q1 5 1 8V15Q1 18 4 18H18Q21 18 21 15V8Q21 5 18 5H16" fill="none" stroke="#fff" stroke-width="2" /><path d="M3 9H9V13H13V16H3zM22 9h2v5h-2zM13 0L8 8H11L10 14L16 6H13z" fill="#fff" /></svg>
        </div>
        <time>02:30<br>05-08-2025</time>
      </div>
    </div>
  </div>
</template>

<style>
body { margin: 0; }
</style>

<style scoped>
* { box-sizing: border-box; }
.desktop { height: 100vh; display: flex; flex-direction: column; overflow: hidden; font-family: "Open Sans", "Noto Sans", sans-serif; font-size: 11px; color: #212529; background: #fff; }
button { font: inherit; color: inherit; background: none; border: 0; padding: 0; display: flex; align-items: center; justify-content: center; cursor: pointer; white-space: nowrap; }
a { color: inherit; text-decoration: none; }
p, h1, h2, ul { margin: 0; padding: 0; list-style: none; }
svg { display: block; flex: none; }
.icon { height: 12px; width: auto; }
.blue { color: #0d6efd; }
.cyan { color: #0dcaf0; }
.amber { color: #ffc107; }
.green { color: #198754; }
.red { color: #dc3545; }
.grey { color: #6c757d; }

.browser { flex: none; background: #dce6d5; }
.strip { display: flex; align-items: center; height: 60px; font-size: 17px; }
.tab-search { width: 42px; height: 42px; margin-left: 8px; border-radius: 14px; background: #f8fbf2; }
.tab { display: flex; align-items: center; width: 340px; padding: 2px 0 0 26px; gap: 15px; color: #3e453b; }
.tab-title { flex: 1; min-width: 0; overflow: hidden; white-space: nowrap; }
.tab.current { position: relative; align-self: flex-end; width: 349px; height: 51px; margin-left: 25px; padding: 0 18px 7px 14px; gap: 13px; border-radius: 16px 16px 0 0; background: #f8fbf2; color: #191d17; }
.tab.current::before, .tab.current::after { content: ""; position: absolute; bottom: 0; width: 14px; height: 14px; }
.tab.current::before { left: -14px; background: radial-gradient(circle at 0 0, #dce6d5 14px, #f8fbf2 14px); }
.tab.current::after { right: -14px; background: radial-gradient(circle at 100% 0, #dce6d5 14px, #f8fbf2 14px); }
.current .tab-title { mask-image: linear-gradient(90deg, #000 88%, transparent); }
.new-tab { width: 32px; height: 32px; margin-left: 14px; }
.win-controls { display: flex; margin-left: auto; }
.win-controls button { width: 69px; height: 50px; }
.toolbar { display: flex; align-items: center; height: 69px; padding: 0 9px 0 5px; border-radius: 14px 14px 0 0; background: #f8fbf2; }
.tool { width: 54px; height: 40px; }
.omnibox { flex: 1; display: flex; align-items: center; height: 51px; margin-left: 12px; padding: 0 11px 0 7px; border-radius: 26px; background: #e4ecdf; }
.site { width: 36px; height: 36px; border-radius: 50%; background: #f8fbf2; }
.omnibox input { flex: 1; min-width: 0; height: 40px; padding: 0; margin-left: 13px; border: 0; outline: 0; background: none; font: inherit; font-size: 20px; color: #22261f; }
.in-box { width: 49px; height: 40px; }
.avatar { width: 30px; height: 30px; margin: 0 18px 0 25px; }
.update { height: 51px; gap: 16px; padding: 0 21px 0 18px; border-radius: 26px; background: #b5f2ae; font-size: 17px; color: #14210f; }
.bookmarks { display: flex; align-items: center; height: 52px; padding: 0 21px 11px 27px; border-bottom: 1px solid #dde4d6; background: #f8fbf2; font-size: 17px; color: #454b42; }
.sep { width: 3px; height: 24px; margin: 0 26px 0 22px; border-radius: 2px; background: #b5f2ae; }
.sep.push { margin: 0 24px 0 auto; }
.bookmark { display: flex; align-items: center; gap: 12px; }

.app { flex: 1; min-height: 0; display: grid; grid-template-columns: 187px minmax(0, 1fr); grid-template-rows: 1fr 43px; }
.sidebar { grid-area: 1 / 1 / 3 / 2; z-index: 1; display: flex; min-height: 0; overflow: hidden; border-right: 1px solid #dee2e6; background: #f8f9fc; font-size: 10px; color: #495057; }
.side-body { flex: none; width: 171px; height: 100%; overflow: hidden; }
.brand { display: flex; align-items: center; gap: 5px; height: 38px; margin-bottom: 15px; padding-left: 15px; font-size: 14px; font-weight: 600; color: #0d6efd; }
.brand .icon { height: 14px; }
.nav-item { display: flex; align-items: center; height: 28px; margin-left: 10px; padding-left: 15px; border-radius: 4px 0 0 4px; line-height: 16px; white-space: nowrap; }
.nav-item.active { background: #e9ecef; color: #0d6efd; }
.nav-item.tall { height: 45px; padding-bottom: 2px; }
.nav-item.strong { font-weight: 700; }
.nav-icon { width: 24px; flex: none; }
.nav-item.wrap { padding-bottom: 1px; white-space: normal; }
.nav-item.wrap .nav-icon { width: 20px; }
.wrap .nav-label { width: 80px; }
.nav-icon .icon { height: 11px; }
.new { display: flex; align-items: center; height: 14px; margin-left: auto; margin-right: 11px; padding: 0 5px; border-radius: 4px; font-size: 8px; font-weight: 800; line-height: 14px; color: #fff; }
.new.cyan { background: #0dcaf0; }
.new.amber { background: #ffc107; }
.new.green { background: #198754; }
.side-body hr { margin: 5px 0 18px; border: 0; border-top: 1px solid #c3c6c9; }
.side-body hr + hr { margin-top: 0; }
.account { display: flex; align-items: center; height: 24px; padding: 0 11px 0 25px; }
.logout { width: 38px; height: 24px; margin-left: auto; border: 1px solid #6c757d; border-radius: 3px; color: #6c757d; }
.rail { display: flex; flex-direction: column; align-items: center; width: 15px; padding: 6px 0 4px; }
.up, .down { border: 5px solid transparent; border-top-width: 0; border-bottom: 7px solid #c6c6c6; }
.down { border-bottom-width: 0; border-top: 7px solid #c6c6c6; margin-top: auto; }
.thumb { width: 9px; height: 90%; margin-top: 6px; border-radius: 5px; background: #c9c9c9; }

main { min-width: 0; overflow: hidden; padding: 17px 23px 0; }
.page-head { display: flex; justify-content: space-between; align-items: center; }
h1 { display: flex; align-items: center; gap: 9px; font-size: 28px; line-height: 36px; font-weight: 600; }
h1 .icon { height: 30px; }
.lead { margin-top: 7px; line-height: 16px; }
.head-actions { display: flex; gap: 9px; font-size: 14px; color: #000; }
.head-actions button { height: 36px; gap: 4px; padding: 0 14px 1px; border-radius: 5px; background: #f8f9fa; }
.head-actions .icon { height: 15px; }
.tabs { display: flex; gap: 22px; height: 36px; padding-left: 12px; border-bottom: 1px solid #dee2e6; font-size: 10px; color: #495057; }
.tabs button { height: 29px; padding: 0 15px 0 17px; border: 1px solid transparent; border-bottom: 0; border-radius: 5px 5px 0 0; }
.tabs .on { border-color: #dee2e6; color: #000; }
.tab-icon { width: 23px; text-align: left; font-size: 11px; }
.tab-icon .icon { height: 11px; }

.stats { display: grid; grid-template-columns: repeat(4, 1fr); gap: 18px; margin-top: 1px; line-height: 18px; }
.stats .note { display: flex; align-items: center; gap: 6px; margin-top: 4px; font-size: 10px; line-height: 16px; color: #5c636a; }
.split { display: flex; gap: 18px; margin-top: 31px; }
.second { margin-top: 18px; }
.wide { flex: 1117; min-width: 0; }
.narrow { flex: 550; min-width: 0; }
h2 { display: flex; align-items: center; gap: 4px; font-size: 14px; line-height: 20px; font-weight: 600; }
h2 .icon { height: 15px; }
.states { display: grid; grid-template-columns: repeat(4, 1fr); margin: 5px -9px 0; text-align: center; line-height: 18px; }
.actions { display: grid; gap: 6px; margin-top: 4px; }
.actions button { height: 29px; gap: 4px; padding-top: 2px; border-radius: 4px; }
.primary { background: #0d6efd; color: #fff; }
.warning { background: #ffc107; color: #000; }
.info { background: #0dcaf0; color: #000; }
.success { background: #198754; color: #fff; }

table { width: 100%; margin-top: 4px; table-layout: fixed; border-collapse: collapse; }
.c-item, .c-qty { width: 25.4%; }
.c-type { width: 17%; }
.c-view { width: 60px; }
td { height: 36px; padding: 0; line-height: 16px; vertical-align: middle; }
td strong { font-size: 12px; }
small { font-size: 10px; color: #5c636a; }
td .code { display: block; font-weight: 600; }
td .code + small { display: block; margin-top: 4px; }
.type { display: inline-block; padding: 0 1px; background: #0dcaf0; color: #fff; }
td .unit { vertical-align: 1px; }
.price { font-size: 10px; color: #5c636a; }
.view button { width: 25px; height: 24px; margin-left: auto; padding-bottom: 1px; border: 1px solid #0d6efd; border-radius: 3px; color: #0d6efd; }
.view .icon { height: 10px; }
.narrow ul { margin-top: 4px; }
.narrow li { display: flex; justify-content: space-between; height: 39px; line-height: 17px; }
.narrow li p { font-size: 12px; font-weight: 600; }
.narrow li small { display: block; line-height: 16px; }
.count { font-size: 16px; line-height: 34px; }

footer { grid-area: 2 / 1 / 3 / 3; border-top: 1px solid #dee2e6; background: #f8f9fc; text-align: center; font-size: 10px; line-height: 44px; color: #495057; }

.taskbar { flex: none; display: flex; align-items: center; height: 70px; border-top: 2px solid #454640; background: linear-gradient(90deg, #232520, #242322 20%, #242322 30%, #252515 40%, #252617); color: #fff; }
.taskbar button { position: relative; height: 56px; }
.weather { width: 36px; margin-left: 29px; }
.alert { position: absolute; top: 3px; left: 16px; width: 24px; height: 24px; border-radius: 50%; background: #c42b1c; font-size: 15px; line-height: 23px; }
.system { display: grid; grid-template-columns: repeat(3, 68px); margin-left: 147px; }
.pinned { display: grid; grid-template-columns: repeat(13, 1fr); width: 861px; margin-left: 37px; }
.open::after { content: ""; position: absolute; bottom: 0; width: 9px; height: 5px; border-radius: 3px; background: #9b9b94; }
.hub::before { content: ""; position: absolute; top: 6px; left: 23px; width: 2px; height: 56px; background: #a5a5a0; }
.hub svg { position: relative; }
.dot { position: absolute; top: 4px; left: 35px; width: 24px; height: 24px; border-radius: 50%; }
.yellow { background: #ffc20e; }
.hp { width: 36px; height: 36px; background: #0096d6; font-size: 13px; line-height: 34px; text-align: center; }
.hp b { font-style: italic; }
.more { width: 40px; margin-left: 40px; }
.bar-line { align-self: stretch; width: 2px; margin-left: 16px; background: #9a9b94; }
.tray { display: flex; align-items: center; margin-left: auto; margin-right: 28px; font-size: 18px; line-height: 24px; }
.chev { margin-right: 28px; }
.lang { margin-left: 26px; text-align: center; }
.status { display: flex; gap: 12px; margin: 0 25px 0 27px; }
.tray time { text-align: right; }
</style>
